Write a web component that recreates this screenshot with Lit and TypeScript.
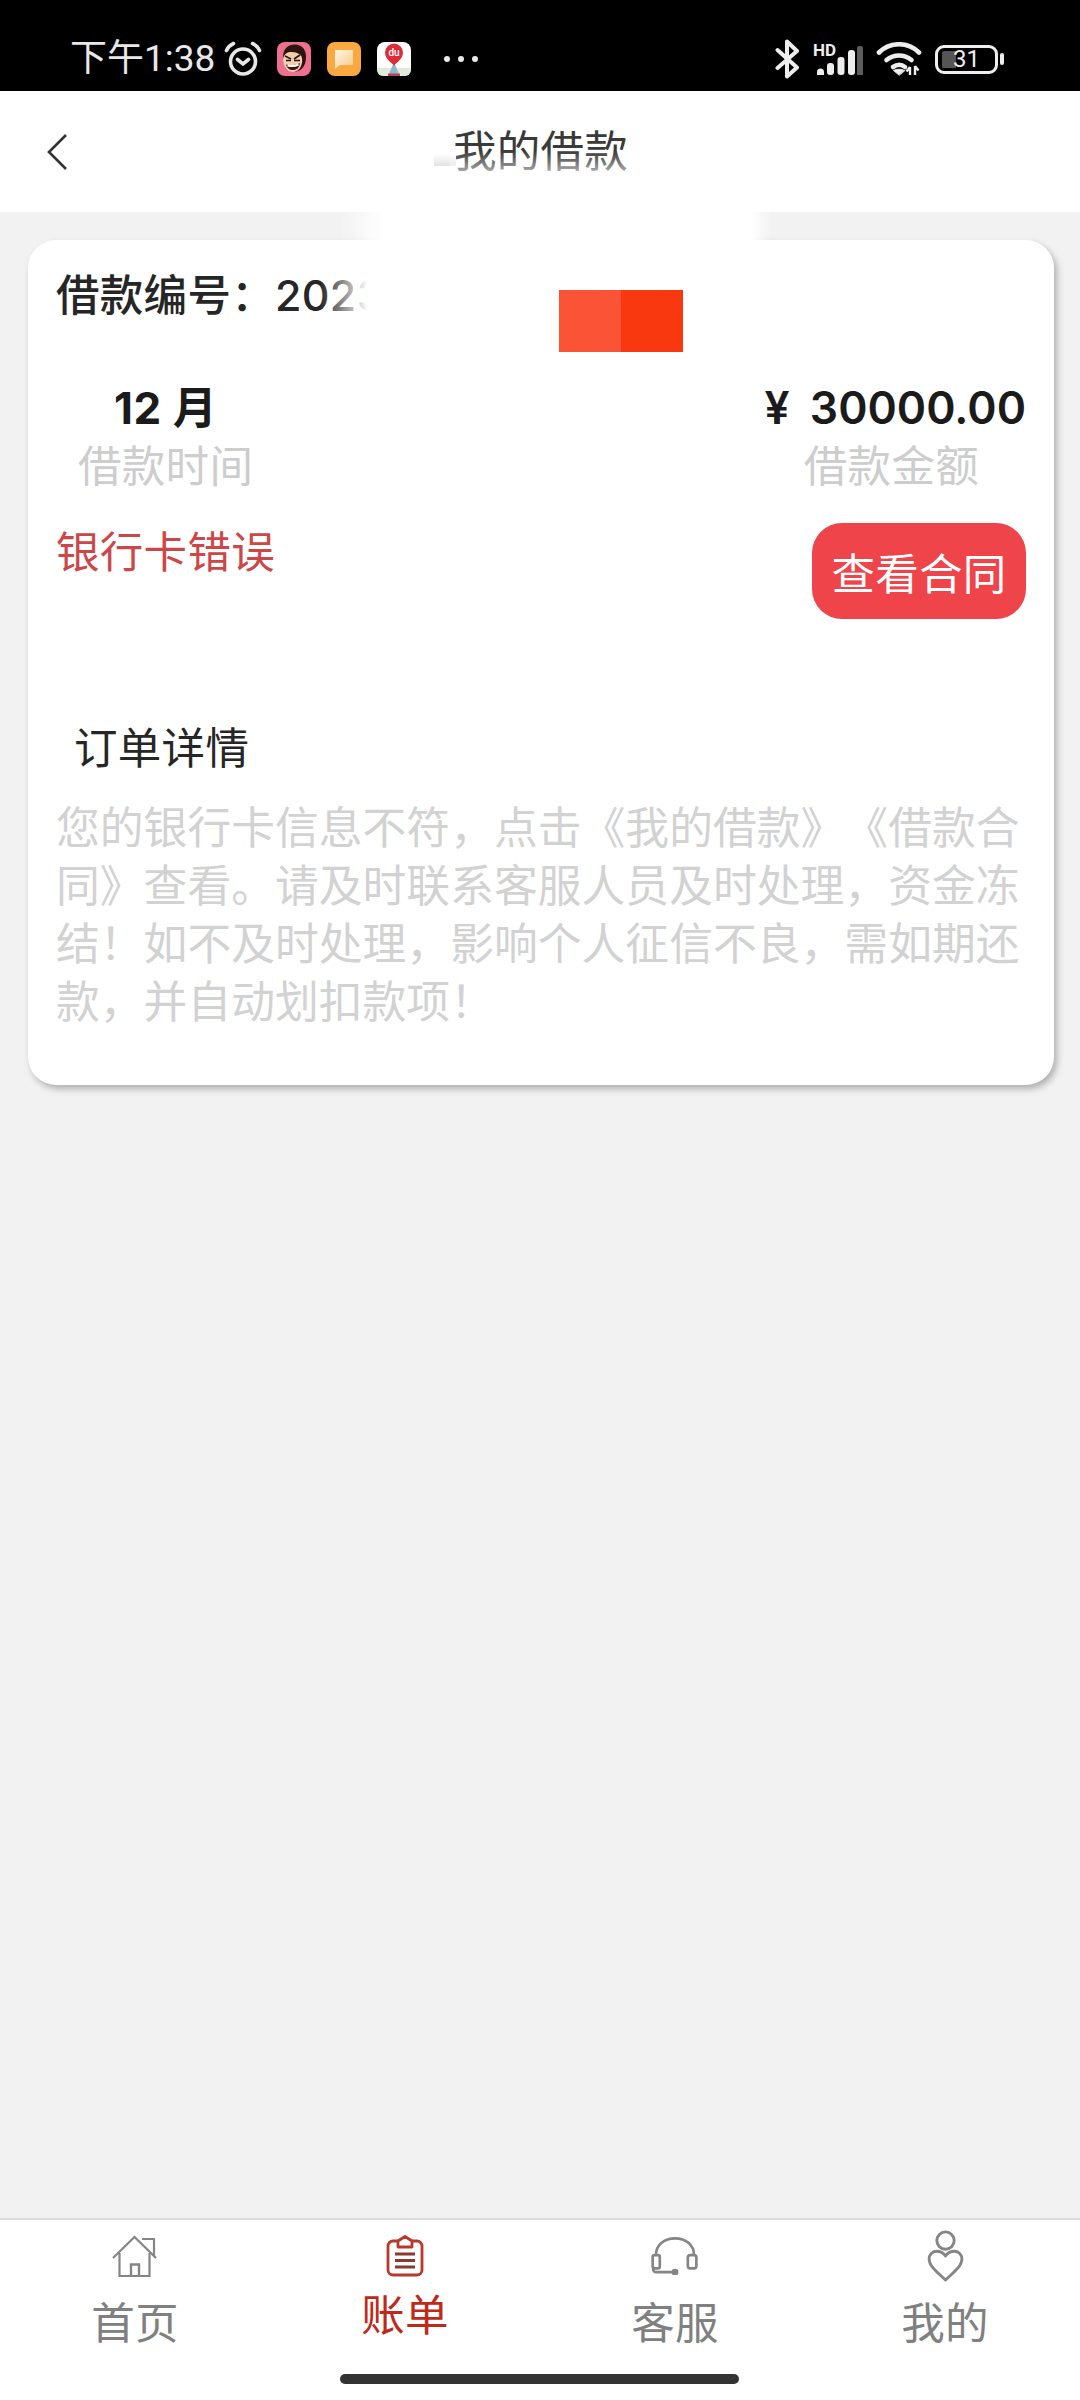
import { LitElement, html, css, svg } from "lit";
import { customElement } from "lit/decorators.js";

const alarm = svg`<svg width="38" height="36" viewBox="0 0 38 36" fill="none" stroke="#e8e8e8" stroke-width="3.600" stroke-linecap="round"><circle cx="19" cy="20.500" r="12.500"/><path d="M2.500 9.500C4 6 6 4 9.500 2.500M35.500 9.500C34 6 32 4 28.500 2.500"/><path d="M13.500 18.500 19 23l5.500-4.500"/></svg>`;
const pink = svg`<svg width="34" height="34" viewBox="0 0 34 34"><rect width="34" height="34" rx="8" fill="#ee6f8f"/><path d="M6 15C6 7 11 2.500 18 2.500c7 0 11 5 11 12 0 5-1 9-4 12-3 3-8 4-11 3-5-1-8-5-8-14.500z" fill="#2c1410"/><path d="M6 18c0-4 3-8 7-8 5 0 11 1 12 6 1 6-2 13-8 14-6 1-11-5-11-12z" fill="#f3cdb0"/><path d="M8 14l6 3M23 13l-6 4M9 18.500h5M17 18.500h6" stroke="#2a1a14" stroke-width="1.700"/><path d="M9 22.500c4 1 9 1 14-1.500-1 5-3 7-7 7s-6-2-7-5.500z" fill="#4a1414"/><path d="M10.500 23.500c3 .8 8 .6 11-1" stroke="#fff" stroke-width="2" fill="none"/></svg>`;
const orange = svg`<svg width="34" height="34" viewBox="0 0 34 34"><defs><linearGradient id="o" x1="0" y1="0" x2="1" y2="1"><stop offset="0" stop-color="#fff6e2"/><stop offset="1" stop-color="#f6c98a"/></linearGradient></defs><rect width="34" height="34" rx="8" fill="#f9a93f"/><path d="M8 8h18v15H13l-5 4z" fill="url(#o)"/></svg>`;
const du = svg`<svg width="34" height="34" viewBox="0 0 34 34"><rect width="34" height="34" rx="8" fill="#fff"/><path d="M0 26h34v2a6 6 0 0 1-6 6H6a6 6 0 0 1-6-6z" fill="#dfeada"/><path d="M12 32l5-12 5 12z" fill="#8fb6cc"/><path d="M11 34h12v-2.500H11z" fill="#b5415a"/><path d="M17 24c-1-3-9-6-9-13.500a9 9 0 0 1 18 0C26 18 18 21 17 24z" fill="#dd2c3a"/><text x="17" y="14" text-anchor="middle" font-family="Roboto, sans-serif" font-size="10" font-weight="500" fill="#fff">du</text></svg>`;
const bluetooth = svg`<svg width="25" height="40" viewBox="0 0 25 40" fill="none" stroke="#eee" stroke-width="4" stroke-linecap="round" stroke-linejoin="round"><path d="M2.500 11 22 28.500 12 37.500V2.500l10 9.500L2.500 29"/></svg>`;
const signal = svg`<svg width="50" height="31" viewBox="0 0 50 31"><path d="M4 31v-3a3.500 3.500 0 0 1 7 0v3z" fill="#eee"/><rect x="14" y="19" width="7" height="12" rx="3" fill="#eee"/><rect x="24.500" y="13" width="7" height="18" rx="3" fill="#eee"/><rect x="35" y="6" width="7" height="25" rx="3" fill="#eee"/><path d="M44 4a2 2 0 0 1 2-2h2a2 2 0 0 1 2 2v27h-6z" fill="#5c5c5c"/></svg>`;
const wifi = svg`<svg width="46" height="34" viewBox="0 0 46 34" fill="none" stroke="#eee" stroke-width="4.600" stroke-linecap="round"><path d="M3 10.500C14-.5 32-.5 43 10.500"/><path d="M10.500 18c7.500-6 17.500-6 25 0"/><path d="M17 25c4-2.800 8.500-2.800 12 0"/><path d="M23 33l-5.500-4.500c3.500-1.800 7-1.800 11 0z" fill="#eee" stroke-width="1"/><path d="M34 33v-8M34 25l-3.500 4.500M39 33v-9M39 24l3.500 4.500" stroke-width="2.400" stroke-linecap="butt"/></svg>`;
const home = svg`<svg width="46" height="42" viewBox="0 0 46 42" fill="none" stroke="#858585" stroke-width="2.200"><path d="M1 23 22.500 2 44 23"/><path d="M30 4h12v17"/><path d="M7.500 18v23h30V18"/><path d="M19 41V29.500h8V41" stroke-width="2.400"/></svg>`;
const bill = svg`<svg width="38" height="42" viewBox="0 0 38 42" fill="none" stroke="#b8392c" stroke-width="2.800" stroke-linejoin="round"><path d="M12 6H7a5 5 0 0 0-5 5v24a5 5 0 0 0 5 5h24a5 5 0 0 0 5-5V11a5 5 0 0 0-5-5h-5"/><path d="M12 6l7-4.500L26 6v6H12z"/><path d="M9 19h20M9 25.500h20M9 32h20" stroke="#8a3a30"/></svg>`;
const headset = svg`<svg width="48" height="38" viewBox="0 0 50 40" fill="none" stroke="#858585" stroke-width="2.800" stroke-linejoin="round"><path d="M5 19C5 8 14 1.500 25 1.500S45 8 45 19"/><rect x="1.500" y="19" width="7.500" height="14" rx="2"/><rect x="38.500" y="19" width="9" height="14" rx="2.500"/><path d="M2 31v3a3 3 0 0 0 3 3h19"/><circle cx="25" cy="37" r="2.200" fill="#858585"/></svg>`;
const mine = svg`<svg width="37" height="52" viewBox="0 0 38 54" fill="none" stroke="#858585" stroke-width="3" stroke-linejoin="round"><circle cx="19" cy="11" r="9"/><path d="M19 27c-2-3-6-5-9.500-5C5 22 2 26 2 30c0 8 10 15 17 22 7-7 17-14 17-22 0-4-3-8-7.500-8-3.500 0-7.500 2-9.500 5z"/></svg>`;

@customElement("app-root")
export class AppRoot extends LitElement {
  static styles = css`
    :host { display: flex; flex-direction: column; width: 1080px; height: 2400px; background: #f2f2f2; font-family: "Noto Sans CJK SC", "Noto Sans", sans-serif; overflow: hidden; position: relative; text-spacing-trim: space-all; }
    .status { height: 91px; background: #000; color: #e8e8e8; flex: none; display: flex; align-items: center; padding: 27px 76px 0 70px; box-sizing: border-box; }
    .time { font-size: 37px; width: 154px; line-height: 40px; font-family: Roboto, "Noto Sans CJK SC", sans-serif; }
    .notes { display: flex; align-items: center; gap: 16px; }
    .notes svg { display: block; }
    .alarm { display: block; margin-right: -1px; }
    .dots { display: flex; gap: 8px; margin-left: 17px; }
    .dots i { width: 6px; height: 6px; border-radius: 50%; background: #e8e8e8; }
    .spacer { flex: 1; }
    .sys { display: flex; align-items: center; gap: 13px; }
    .sys svg { display: block; }
    .sig { position: relative; width: 50px; height: 31px; }
    .hd { position: absolute; left: 0; top: -1px; font: 700 17px/14px Roboto, sans-serif; color: #eee; }
    .batt { display: flex; align-items: center; gap: 2px; }
    .batt-body { width: 63px; height: 29px; border: 3px solid #eee; border-radius: 9px; position: relative; font: 24px/23px Roboto, sans-serif; color: #eee; text-align: center; box-sizing: border-box; }
    .batt-fill { position: absolute; left: 4px; top: 3px; bottom: 3px; width: 14px; background: #555; border-radius: 2px 0 0 2px; }
    .batt-body span { position: relative; }
    .batt-cap { width: 4px; height: 12px; background: #eee; border-radius: 2px; }

    .header { height: 121px; background: #fff; flex: none; display: flex; align-items: center; justify-content: center; position: relative; box-sizing: border-box; padding-bottom: 6px; }
    .back { position: absolute; left: 46px; top: 43px; display: block; }
    .title { font-size: 43.500px; letter-spacing: .3px; color: #3a3a3a; line-height: 60px; margin-left: 1px; }
    .smudge { position: absolute; left: 434px; top: 63px; width: 22px; height: 12px; background: linear-gradient(#fff, #e2e2e2); }
    .fade { position: absolute; left: 450px; top: 60px; width: 190px; height: 22px; background: linear-gradient(rgba(255,255,255,0), rgba(255,255,255,0.6)); }

    .main { flex: 1; padding: 28px 26px 0 28px; position: relative; }
    .card { background: #fff; border-radius: 28px; padding: 23px 30px 0 28px; height: 845px; box-sizing: border-box; box-shadow: 3px 4px 7px rgba(0,0,0,.28); position: relative; }
    .cjk { font-size: 43.500px; letter-spacing: .3px; }
    .no { line-height: 60px; color: #262626; font-weight: 500; height: 60px; }
    .no b { font: 500 43px/60px Inter, sans-serif; }
    .no-mask { position: absolute; left: 292px; top: 0; width: 100px; height: 100px; background: linear-gradient(90deg, rgba(255,255,255,0), #fff 48%); }
    .blocks { position: absolute; left: 531px; top: 50px; display: flex; }
    .blocks i { width: 62px; height: 62px; display: block; }
    .blocks i:first-child { background: #fb5335; }
    .blocks i:last-child { background: #fa3810; }
    .glow { position: absolute; left: 312px; top: -28px; width: 432px; height: 30px; background: linear-gradient(90deg, rgba(255,255,255,0), #fff 10%, #fff 95%, rgba(255,255,255,0)); }

    .stats { display: flex; justify-content: space-between; margin-top: 59px; }
    .stat { display: flex; flex-direction: column; align-items: center; }
    .stat.l { margin-left: 22px; }
    .stat.r { align-items: flex-end; margin-right: -2px; }
    .val { font: 700 44px/52px Inter, "Noto Sans CJK SC", sans-serif; color: #1b1b1b; letter-spacing: .5px; }
    .val.amt { font: 600 44.500px/52px Inter, "Noto Sans CJK SC", sans-serif; word-spacing: 9px; letter-spacing: 0; }
    .lab { color: #cdcdcd; line-height: 60px; }
    .lab.r { margin-right: 47px; }
    .row { display: flex; justify-content: space-between; align-items: flex-start; }
    .err { color: #cc4747; line-height: 60px; margin-top: 26px; }
    .btn { width: 214px; height: 96px; background: #ee444a; color: #fff; border-radius: 30px; display: flex; align-items: center; justify-content: center; margin: 29px -2px 0 0; }
    .h2 { color: #262626; line-height: 60px; margin: 97px 0 0 18px; }
    .para { font-size: 43.800px; line-height: 58px; color: #d2d2d2; margin-top: 20px; width: 970px; }

    .tabbar { height: 182px; background: #fff; border-top: 2px solid #dcdcdc; flex: none; box-sizing: border-box; display: grid; grid-template-columns: repeat(4, 270px); position: relative; }
    .tab { display: flex; flex-direction: column; align-items: center; color: #808080; line-height: 60px; }
    .tab svg { display: block; }
    .tab .ic { height: 50px; margin-top: 11px; display: flex; align-items: center; }
    .tab span { margin-top: 10px; }
    .tab.on { color: #c0281a; }
    .tab.on span { margin-top: 2px; }
    .homebar { position: absolute; left: 340px; top: 154px; width: 399px; height: 10px; border-radius: 5px; background: #333; }
  `;

  render() {
    return html`
      <div class="status">
        <div class="time">下午1:38</div>
        <div class="notes">
          <span class="alarm">${alarm}</span>${pink}${orange}${du}
          <div class="dots"><i></i><i></i><i></i></div>
        </div>
        <div class="spacer"></div>
        <div class="sys">
          ${bluetooth}
          <div class="sig"><span class="hd">HD</span>${signal}</div>
          ${wifi}
          <div class="batt"><div class="batt-body"><div class="batt-fill"></div><span>31</span></div><div class="batt-cap"></div></div>
        </div>
      </div>
      <div class="header">
        <svg class="back" width="22" height="36" viewBox="0 0 22 36" fill="none" stroke="#333" stroke-width="2.600"><path d="M20 1 3 18l17 17"/></svg>
        <div class="smudge"></div>
        <div class="title">我的借款</div>
        <div class="fade"></div>
      </div>
      <div class="main">
        <div class="card">
          <div class="glow"></div>
          <div class="no cjk">借款编号：<b>2023</b><span class="no-mask"></span></div>
          <div class="blocks"><i></i><i></i></div>
          <div class="stats">
            <div class="stat l"><div class="val">12 月</div><div class="lab cjk">借款时间</div></div>
            <div class="stat r"><div class="val amt">¥ 30000.00</div><div class="lab r cjk">借款金额</div></div>
          </div>
          <div class="row">
            <div class="err cjk">银行卡错误</div>
            <div class="btn cjk">查看合同</div>
          </div>
          <div class="h2 cjk">订单详情</div>
          <div class="para">您的银行卡信息不符，点击《我的借款》《借款合同》查看。请及时联系客服人员及时处理，资金冻结！如不及时处理，影响个人征信不良，需如期还款，并自动划扣款项！</div>
        </div>
      </div>
      <div class="tabbar">
        <div class="tab cjk"><div class="ic">${home}</div><span>首页</span></div>
        <div class="tab on cjk"><div class="ic">${bill}</div><span>账单</span></div>
        <div class="tab cjk"><div class="ic">${headset}</div><span>客服</span></div>
        <div class="tab cjk"><div class="ic">${mine}</div><span>我的</span></div>
        <div class="homebar"></div>
      </div>
    `;
  }
}
